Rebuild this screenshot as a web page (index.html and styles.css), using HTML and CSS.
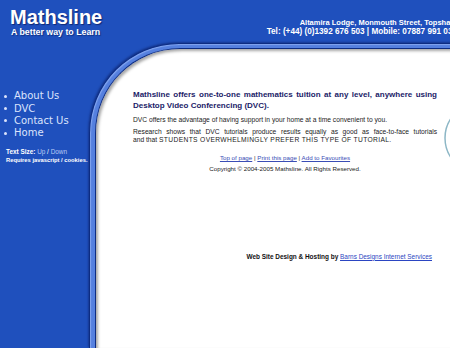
FILE: index.html
```html
<!DOCTYPE html>
<html lang="en">
<head>
<meta charset="utf-8">
<title>Mathsline</title>
<link rel="stylesheet" href="styles.css">
</head>
<body>
<div class="page">
  <header class="header">
    <div class="brand">
      <div class="brand-name">Mathsline</div>
      <div class="tagline">A better way to Learn</div>
    </div>
    <div class="contact">
      <div class="contact-addr">Altamira Lodge, Monmouth Street, Topsham</div>
      <div class="contact-tel">Tel: (+44) (0)1392 676 503 | Mobile: 07887 991 039</div>
    </div>
  </header>
  <div class="body-row">
    <aside class="sidebar">
      <ul class="nav">
        <li><a href="#">About Us</a></li>
        <li><a href="#">DVC</a></li>
        <li><a href="#">Contact Us</a></li>
        <li><a href="#">Home</a></li>
      </ul>
      <div class="textsize">
        <div><b>Text Size:</b> <a href="#">Up</a> / <a href="#">Down</a></div>
        <div class="req"><b>Requires javascript / cookies.</b></div>
      </div>
    </aside>
    <div class="panel">
      <main class="panel-inner">
        <svg class="bubble" width="50" height="80" viewBox="0 0 50 80" aria-hidden="true">
          <circle cx="39" cy="37" r="35" fill="none" stroke="#8db7c6" stroke-width="1.5"/>
        </svg>
        <h1 class="lead">Mathsline offers one-to-one mathematics tuition at any level, anywhere using Desktop Video Conferencing (DVC).</h1>
        <p class="text">DVC offers the advantage of having support in your home at a time convenient to you.</p>
        <p class="text research"><span class="full-line">Research shows that DVC tutorials produce results equally as good as face-to-face tutorials</span> and that <span class="caps">STUDENTS OVERWHELMINGLY PREFER THIS TYPE OF TUTORIAL.</span></p>
        <p class="links"><a href="#">Top of page</a> | <a href="#">Print this page</a> | <a href="#">Add to Favourites</a></p>
        <p class="copyright">Copyright © 2004-2005 Mathsline. All Rights Reserved.</p>
        <p class="credit"><b>Web Site Design &amp; Hosting by</b> <a href="#">Barns Designs Internet Services</a></p>
      </main>
    </div>
  </div>
</div>
</body>
</html>
```
FILE: styles.css
```css
html, body {
  margin: 0;
  height: 100%;
  overflow: hidden;
}
body {
  background: #1f50bd;
  font-family: "Liberation Sans", Arial, Helvetica, sans-serif;
}
.page {
  width: 470px;
  height: 348px;
  display: flex;
  flex-direction: column;
}
.header {
  height: 43px;
  flex-shrink: 0;
  display: flex;
  justify-content: space-between;
}
.brand {
  padding: 7px 0 0 10px;
  color: #fff;
}
.brand-name {
  font-size: 20px;
  font-weight: bold;
  line-height: 20px;
  text-shadow: 1px 1px 1px rgba(0, 10, 60, 0.55);
}
.tagline {
  font-size: 8.8px;
  font-weight: bold;
  line-height: 10px;
  padding-left: 1px;
  text-shadow: 1px 1px 1px rgba(0, 10, 60, 0.45);
}
.contact {
  padding: 19px 13px 0 0;
  text-align: right;
  color: #fff;
  font-weight: bold;
  white-space: nowrap;
}
.contact-addr {
  font-size: 7.5px;
  line-height: 8px;
}
.contact-tel {
  font-size: 8.2px;
  line-height: 9px;
}
.body-row {
  flex: 1;
  display: flex;
  min-height: 0;
}
.sidebar {
  width: 89px;
  flex-shrink: 0;
}
.nav {
  list-style: none;
  margin: 0;
  padding: 47.4px 0 0 3.5px;
  font-family: "DejaVu Sans", Verdana, sans-serif;
  font-size: 10px;
  line-height: 12.2px;
}
.nav li {
  display: flex;
  align-items: center;
  gap: 7.5px;
}
.nav li::before {
  content: "";
  width: 3px;
  height: 3px;
  border-radius: 50%;
  background: #dbe3fc;
}
.nav a {
  color: #dbe3fc;
  text-decoration: none;
}
.textsize {
  margin-top: 8.4px;
  padding-left: 6px;
  font-size: 6.4px;
  line-height: 8.5px;
  color: #fff;
  white-space: nowrap;
}
.textsize .req {
  font-size: 5.8px;
}
.textsize a {
  color: #b9cbf5;
  text-decoration: none;
}
.panel {
  flex: 1;
  display: flex;
  background: #5580df;
  border-top: 1px solid #0d2c82;
  border-left: 1px solid #0d2c82;
  border-top-left-radius: 90px;
  padding: 4px 0 0 5px;
  box-shadow: -1px -1px 2px rgba(0, 10, 60, 0.35), inset 1px 1px 1px rgba(150, 180, 245, 0.7);
}
.panel-inner {
  flex: 1;
  position: relative;
  background: #fff;
  border-top: 1px solid #0d2c82;
  border-left: 1px solid #0d2c82;
  border-top-left-radius: 85px;
  box-shadow: inset 2px 2px 3px rgba(0, 0, 0, 0.35);
  padding: 39.5px 33px 0 37px;
}
.bubble {
  position: absolute;
  left: 345px;
  top: 52px;
}
.lead {
  margin: 0;
  font-size: 8px;
  line-height: 11px;
  font-weight: bold;
  color: #1b1b68;
  text-align: justify;
}
.text {
  margin: 5.1px 0 0;
  font-size: 6.7px;
  line-height: 8.5px;
  color: #222;
  text-align: justify;
}
.research {
  margin-top: 3.9px;
}
.full-line {
  display: block;
  text-align: justify;
  text-align-last: justify;
}
.caps {
  letter-spacing: 0.35px;
}
.links {
  margin: 9.3px 0 0;
  font-size: 6.2px;
  line-height: 8px;
  text-align: center;
  color: #333;
}
.links a {
  color: #3a4db5;
}
.copyright {
  margin: 2.5px 0 0;
  font-size: 6.2px;
  line-height: 8px;
  text-align: center;
  color: #222;
}
.credit {
  margin: 80px 0 0;
  padding-right: 5px;
  font-size: 6.45px;
  line-height: 8px;
  text-align: right;
  color: #111;
}
.credit a {
  color: #2b45c2;
}
```
